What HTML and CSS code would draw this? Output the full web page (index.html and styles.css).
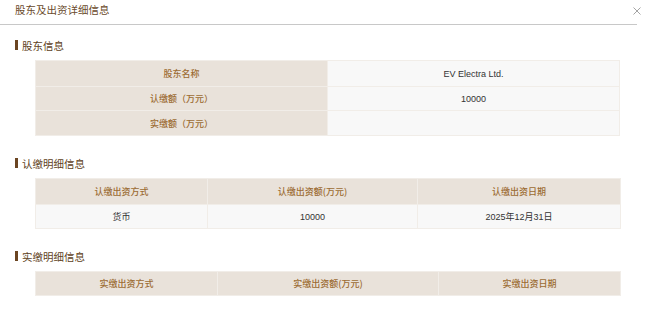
FILE: index.html
```html
<!DOCTYPE html>
<html lang="zh-CN">
<head>
<meta charset="utf-8">
<title>股东及出资详细信息</title>
<link rel="stylesheet" href="styles.css">
</head>
<body>
<div class="dialog">
  <div class="dlg-header">
    <span class="dlg-title">股东及出资详细信息</span>
    <span class="dlg-close"><svg width="8" height="8" viewBox="0 0 8 8"><path d="M0.5 0.5 L7.5 7.5 M7.5 0.5 L0.5 7.5" stroke="#9a9a9a" stroke-width="0.9" fill="none"/></svg></span>
  </div>
  <div class="dlg-body">
    <div class="sec-title"><span class="bar"></span>股东信息</div>
    <table class="tbl kv">
      <tr><th>股东名称</th><td>EV Electra Ltd.</td></tr>
      <tr><th>认缴额（万元）</th><td>10000</td></tr>
      <tr><th>实缴额（万元）</th><td></td></tr>
    </table>

    <div class="sec-title"><span class="bar"></span>认缴明细信息</div>
    <table class="tbl grid g2">
      <colgroup><col class="c1"><col class="c2"><col class="c3"></colgroup>
      <tr><th>认缴出资方式</th><th>认缴出资额(万元)</th><th>认缴出资日期</th></tr>
      <tr><td>货币</td><td>10000</td><td>2025年12月31日</td></tr>
    </table>

    <div class="sec-title"><span class="bar"></span>实缴明细信息</div>
    <table class="tbl grid g3">
      <colgroup><col class="c1"><col class="c2"><col class="c3"></colgroup>
      <tr><th>实缴出资方式</th><th>实缴出资额(万元)</th><th>实缴出资日期</th></tr>
    </table>
  </div>
</div>
</body>
</html>
```
FILE: styles.css
```css
* { box-sizing: border-box; }
html, body { margin: 0; padding: 0; background: #fff; }
body {
  font-family: "Liberation Sans", "Noto Sans CJK SC", sans-serif;
  width: 650px;
  height: 311px;
  overflow: hidden;
}
.dialog { position: relative; }
.dlg-header {
  height: 25px;
  margin-right: 13px;
  padding-left: 15px;
  border-bottom: 1px solid #c8c8c8;
  display: flex;
  align-items: center;
}
.dlg-title {
  font-family: "Noto Sans CJK SC", sans-serif;
  font-size: 10.5px;
  color: #6a4a2b;
  line-height: 14px;
  margin-top: -4px;
}
.dlg-close {
  position: absolute;
  right: 9px;
  top: 7px;
  width: 8px;
  height: 8px;
  display: block;
  line-height: 0;
}
.dlg-body { padding: 0 30px 0 15px; }
.sec-title {
  margin-top: 12px;
  height: 16px;
  display: flex;
  align-items: center;
  font-family: "Noto Sans CJK SC", sans-serif;
  font-size: 10.5px;
  color: #5e3f22;
  margin-bottom: 7px;
}
.sec-title .bar {
  display: inline-block;
  width: 3px;
  height: 10px;
  background: #6b4522;
  margin-right: 4px;
}
.tbl {
  margin-left: 20px;
  width: 585px;
  border-collapse: collapse;
  table-layout: fixed;
  font-size: 9px;
  margin-bottom: 19px;
}
.tbl th, .tbl td {
  height: 25px;
  padding: 0 4px;
  text-align: center;
  border: 1px solid #f1ede8;
}
.tbl th {
  background: #e9e2da;
  color: #9c6c33;
  font-family: "Noto Sans CJK SC", sans-serif;
  font-weight: 500;
}
.tbl td {
  background: #f8f8f8;
  color: #333;
  font-family: "Liberation Sans", "Noto Sans CJK SC", sans-serif;
}
.kv th { width: 292px; }
.kv tr:first-child th, .kv tr:first-child td { height: 26px; }
.kv tr:nth-child(2) th, .kv tr:nth-child(2) td { height: 24px; }
.g2 .c1 { width: 172px; }
.g2 .c2 { width: 210px; }
.g2 .c3 { width: 203px; }
.g2 tr:first-child th { height: 26px; }
.g2 td { height: 24px; }
.g3 .c1 { width: 182px; }
.g3 .c2 { width: 221px; }
.g3 .c3 { width: 182px; }
.g3 th { height: 24px; }
```
